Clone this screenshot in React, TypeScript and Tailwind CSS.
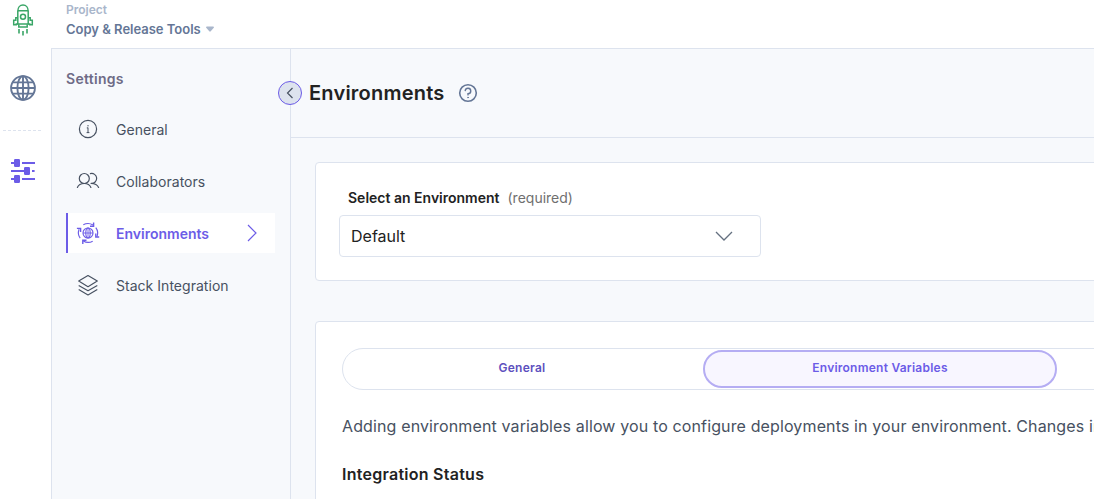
import React from "react";

function RocketLogo() {
  return (
    <svg width="24" height="34" viewBox="11 3 24 34" fill="none" stroke="#3aa667" strokeWidth="1.5">
      <path d="M17.8 24V11.2C17.8 7.6 20 5 23 5s5.2 2.6 5.2 6.2V24Z" />
      <path d="M17.8 10.8h10.4M18.8 24.2V27h8.4v-2.8" />
      <circle cx="23" cy="16.7" r="2.5" />
      <path d="M17.6 17.8h-1.8v2.4h-2.1v4.5h2.5V24h1.6M28.4 17.8h1.8v2.4h2.1v4.5h-2.5V24h-1.6" />
      <path d="M19 29v4.6M23 31v4.6M27 29v4.6" strokeWidth="1.6" />
    </svg>
  );
}

function Globe() {
  return (
    <svg width="26" height="26" viewBox="0 0 26 26" fill="none" stroke="#647696" strokeWidth="1.9">
      <circle cx="13" cy="13" r="11.9" />
      <ellipse cx="13" cy="13" rx="5.6" ry="11.9" />
      <path d="M13 1v24M1 13h24M2.8 7.4h20.4M2.8 18.6h20.4" />
    </svg>
  );
}

function Sliders() {
  return (
    <svg width="24" height="26" viewBox="0 0 24 26" fill="#6c5ce7">
      <path d="M0 4h4v2H0zM11 4h13v2H11zM0 12h13v2H0zM21 12h2.6v2H21zM0 20h4v2H0zM11 20h13v2H11z" />
      <rect x="3" y="1" width="6" height="8" rx="1.2" />
      <rect x="13" y="9" width="6" height="8" rx="1.2" />
      <rect x="3" y="17" width="6" height="8" rx="1.2" />
    </svg>
  );
}

function InfoIcon() {
  return (
    <svg width="24" height="24" viewBox="0 0 24 24" fill="none" stroke="#475161">
      <circle cx="12" cy="12" r="8.6" strokeWidth="1.2" />
      <path d="M12 10.6v5M12 8v1.4M10.8 10.9H12M10.6 15.6h2.8" strokeWidth="1" />
    </svg>
  );
}

function PeopleIcon() {
  return (
    <svg width="24" height="24" viewBox="0 0 24 24" fill="none" stroke="#475161" strokeWidth="1.2" strokeLinecap="round">
      <circle cx="8.3" cy="9.5" r="5" />
      <path d="M1.4 18.5c1-2.6 3.6-4 6.9-4s5.6 1.4 6.6 4" />
      <path d="M14.4 4.6a5 5 0 1 1 .7 9.8M15.1 14.5c3.8 0 6.4 1.4 7.5 4" />
    </svg>
  );
}

function EnvironmentIcon() {
  return (
    <svg width="24" height="24" viewBox="0 0 24 24" fill="none" stroke="#6c5ce7" strokeWidth="1.15">
      <circle cx="12" cy="12" r="5" />
      <ellipse cx="12" cy="12" rx="2.2" ry="5" />
      <path d="M12 7v10M7 12h10" strokeWidth=".9" />
      <path d="M7.3 3.8A9.5 9.5 0 0 1 17 4M19.8 6.6a9.5 9.5 0 0 1 1.2 9M16.7 20.2a9.5 9.5 0 0 1-9.4-.2M4.2 17.2a9.5 9.5 0 0 1-1.1-9" />
      <path d="M17.6 1.6v3.6H14M23.2 16h-3.4v-3.4M6.8 23v-3.7h3.7M.9 7.4h3.7v3.7" strokeWidth="1.4" />
    </svg>
  );
}

function StackIcon() {
  return (
    <svg width="24" height="24" viewBox="0 0 24 24" fill="none" stroke="#475161" strokeWidth="1.15" strokeLinejoin="round">
      <path d="m12 2.5 9.3 5.6-9.3 5.6-9.3-5.6Z" />
      <path d="m2.7 12.5 9.3 5.2 9.3-5.2M2.7 16.5l9.3 5.4 9.3-5.4" />
    </svg>
  );
}

function NavItem({ icon, label }: { icon: React.ReactNode; label: string }) {
  return (
    <li className="flex h-10 items-center gap-4 pl-[10px] text-[14px] tracking-[0.03px] text-[#475161]">
      {icon}
      <span>{label}</span>
    </li>
  );
}

export default function App() {
  return (
    <div className="flex h-[499px] w-full overflow-hidden bg-white font-['Inter',sans-serif] whitespace-nowrap">
      <aside className="flex w-[51px] shrink-0 flex-col">
        <div className="ml-[11px] mt-[3px] h-[34px]"><RocketLogo /></div>
        <div className="ml-[10px] mt-[38px]"><Globe /></div>
        <div className="ml-[3px] mt-[29px] h-px w-[40px] bg-[repeating-linear-gradient(90deg,#dde3ee_0_3px,transparent_3px_5px)]" />
        <div className="ml-[11px] mt-[27px]"><Sliders /></div>
      </aside>
      <div className="flex min-w-0 flex-1 flex-col">
        <header className="flex h-[48px] shrink-0 flex-col pl-[15px] pt-[2px]">
          <span className="text-[12px] leading-[16px] font-semibold text-[#a9b6cb]">Project</span>
          <div className="mt-[2px] flex items-center gap-[5px]">
            <span className="text-[13px] leading-[18px] font-semibold tracking-[-0.01px] text-[#647696]">Copy &amp; Release Tools</span>
            <svg width="8" height="6" viewBox="0 0 8 6" fill="#a9b6cb"><path d="M0 1.5Q0 .5 1 .5h6q1 0 1 1L4.7 5.3q-.7.7-1.4 0Z" /></svg>
          </div>
        </header>
        <div className="flex min-h-0 flex-1 border-l border-t border-[#dde3ee] bg-[#f7f9fc]">
          <nav className="w-[239px] shrink-0 border-r border-[#dde3ee] pl-[14px] pt-5">
            <h2 className="text-[14px] leading-[20px] font-semibold tracking-[0.28px] text-[#6e6b86]">Settings</h2>
            <ul className="mt-5 flex w-[209px] flex-col gap-3">
              <NavItem icon={<InfoIcon />} label="General" />
              <NavItem icon={<PeopleIcon />} label="Collaborators" />
              <li className="flex h-10 items-center border-l-2 border-[#6c5ce7] bg-white pl-2 text-[14px] font-semibold text-[#6c5ce7]">
                <EnvironmentIcon />
                <span className="ml-4">Environments</span>
                <svg className="mr-[18px] ml-auto" width="10" height="18" viewBox="0 0 10 18" fill="none" stroke="#6c5ce7" strokeWidth="1.2"><path d="m1 1 8 8-8 8" /></svg>
              </li>
              <NavItem icon={<StackIcon />} label="Stack Integration" />
            </ul>
          </nav>
          <main className="flex min-w-0 flex-1 flex-col">
            <div className="flex h-[89px] shrink-0 items-center border-b border-[#dde3ee]">
              <button className="-ml-[13px] flex size-6 items-center justify-center rounded-full border border-[#6c5ce7] bg-[#dde3ee]">
                <svg width="8" height="12" viewBox="0 0 8 12" fill="none" stroke="#475161" strokeWidth="1.2"><path d="M6.5 1 1.5 6l5 5" /></svg>
              </button>
              <h1 className="ml-[7px] w-[135px] text-[20px] leading-[28px] font-semibold tracking-[0.22px] text-[#222222]">Environments</h1>
              <svg className="ml-[14px]" width="20" height="20" viewBox="0 0 20 20" fill="none" stroke="#647696" strokeWidth="1.6" strokeLinecap="round">
                <circle cx="10" cy="10" r="8.3" />
                <path d="M7.2 7.5A2.8 2.8 0 1 1 10 10.8v1.1" strokeWidth="1.4" />
                <circle cx="10" cy="14.5" r=".5" fill="#647696" strokeWidth=".6" />
              </svg>
            </div>
            <section className="mt-6 ml-6 h-[119px] w-[820px] shrink-0 rounded border border-[#dde3ee] bg-white pl-[23px] pt-6">
              <div className="ml-[9px] flex h-5 items-center gap-2 text-[14px]">
                <span className="font-semibold text-[#222222]">Select an Environment</span>
                <span className="text-[#6f6f6f]">(required)</span>
              </div>
              <div className="mt-2 flex h-[42px] w-[422px] items-center rounded border border-[#dde3ee] pl-[11px] text-[16px] text-[#222222]">
                Default
                <svg className="mr-[27px] ml-auto" width="18" height="10" viewBox="0 0 18 10" fill="none" stroke="#647080" strokeWidth="1.3"><path d="m1 1 8 8 8-8" /></svg>
              </div>
            </section>
            <section className="mt-10 ml-6 h-[220px] w-[820px] shrink-0 rounded border border-[#dde3ee] bg-white pl-[26px] pt-[26px]">
              <div className="flex h-[42px] w-[1078px] gap-1 rounded-[21px] border border-[#dde3ee] pl-[2px] pt-px text-[12px] font-semibold tracking-[0.24px]">
                <div className="flex h-[38px] w-[354px] items-center justify-center pb-[2px] text-[#5d50be]">General</div>
                <div className="flex h-[38px] w-[354px] items-center justify-center rounded-[19px] border-2 border-[#b5adf3] bg-[#f8f6ff] pb-[2px] text-[#6c5ce7]">Environment Variables</div>
              </div>
              <p className="mt-6 text-[16px] leading-[24px] tracking-[0.13px] text-[#475161]">Adding environment variables allow you to configure deployments in your environment. Changes in</p>
              <h3 className="mt-6 text-[16px] leading-[24px] font-semibold tracking-[0.26px] text-[#222222]">Integration Status</h3>
            </section>
          </main>
        </div>
      </div>
    </div>
  );
}
